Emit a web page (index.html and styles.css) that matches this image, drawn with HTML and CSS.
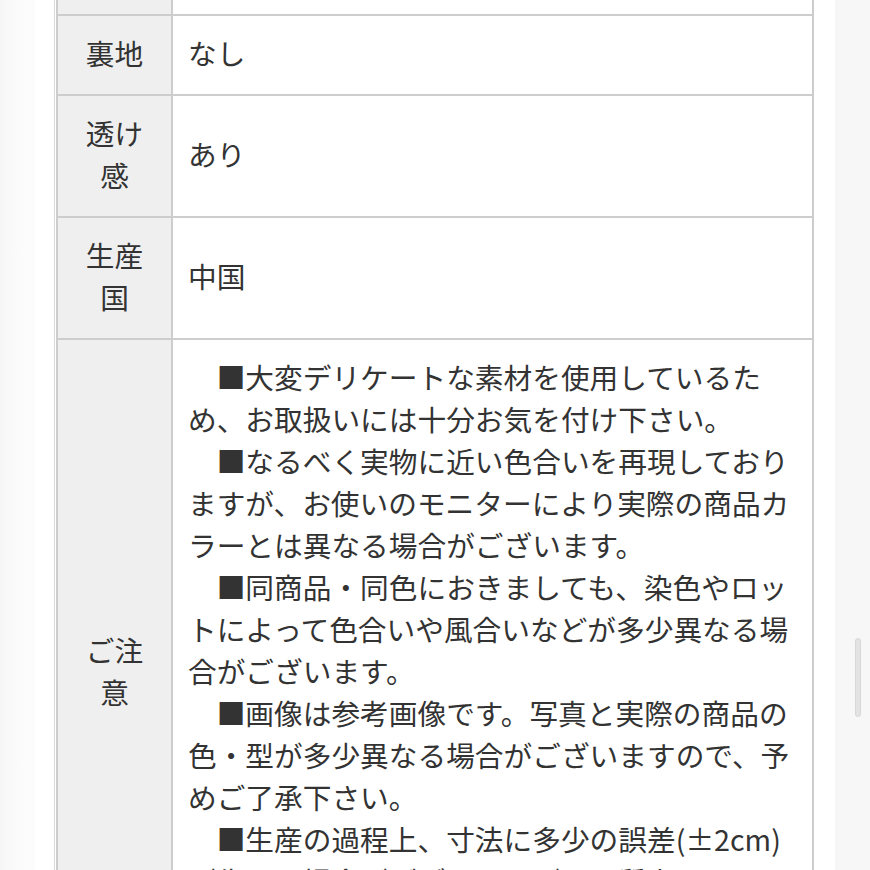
FILE: index.html
```html
<!DOCTYPE html>
<html lang="ja">

<head>
  <meta charset="utf-8">
  <title>商品詳細</title>

  <link rel="stylesheet" href="styles.css">
</head>

<body>
  <div class="page">
    <div class="spec-wrap">
      <table class="spec-table">
        <colgroup>
          <col class="spec-head-col">
          <col>
        </colgroup>
        <tbody>
          <!-- previous row, scrolled out of view -->
          <tr>
            <th>&nbsp;</th>
            <td>&nbsp;</td>
          </tr>
          <tr>
            <th>裏地</th>
            <td>なし</td>
          </tr>
          <tr>
            <th>透け感</th>
            <td>あり</td>
          </tr>
          <tr>
            <th>生産国</th>
            <td>中国</td>
          </tr>
          <tr>
            <th>ご注意</th>
            <td>
              <p class="note">■大変デリケートな素材を使用しているため、お取扱いには十分お気を付け下さい。</p>
              <p class="note">■なるべく実物に近い色合いを再現しておりますが、お使いのモニターにより実際の商品カラーとは異なる場合がございます。</p>
              <p class="note">■同商品・同色におきましても、染色やロットによって色合いや風合いなどが多少異なる場合がございます。</p>
              <p class="note">■画像は参考画像です。写真と実際の商品の色・型が多少異なる場合がございますので、予めご了承下さい。</p>
              <p class="note">■生産の過程上、寸法に多少の誤差(±2cm)が生じる場合がございますが、品質上の問題ではございませんので、不良品としての返品・交換はお受けできかねます。予めご了承下さい。</p>
            </td>
          </tr>
        </tbody>
      </table>
    </div>
  </div>

  <!-- overlay scrollbar -->
  <div class="scroll-thumb"></div>
</body>

</html>
```

FILE: styles.css
```css
* {
  margin: 0;
  padding: 0;
  box-sizing: border-box;
}

:root {
  --text: #333;
  --line: #cdcdcd;
  --head-bg: #efefef;
}

body {
  font-family: "Noto Sans CJK JP", "Noto Sans", sans-serif;
  color: var(--text);
  background: linear-gradient(to right, #f6f6f6 0, #fbfbfb 17px, #fcfcfc 35px, #fff 35px, #fff 835px, #f7f7f7 835px);
  overflow: hidden;
  height: 870px;
}

.page {
  width: 800px;
  margin-left: 35px;
  padding: 0 22px 0 19px;
  background-color: #fff;
}

.spec-wrap {
  margin-top: -66px;
  border-left: 1px solid #dadada;
  padding-left: 1px;
}

.spec-table {
  width: 758px;
  table-layout: fixed;
  border-collapse: collapse;
  border: 2px solid var(--line);
  font-size: 28.7px;
  line-height: 42px;
}

.spec-head-col {
  width: 115px;
}

.spec-table th,
.spec-table td {
  border: 2px solid var(--line);
  padding: 16px 17px 20px 15px;
  vertical-align: middle;
  font-weight: 400;
}

.spec-table th {
  background-color: var(--head-bg);
  text-align: center;
  padding: 16px 27px 20px 27px;
}

.spec-table td {
  text-align: left;
}

.note {
  text-indent: 1em;
}

.scroll-thumb {
  position: absolute;
  left: 855px;
  top: 638px;
  width: 6px;
  height: 79px;
  border-radius: 3px;
  background-color: #e3e3e3;
  border: 1px solid #d8d8d8;
}
```
